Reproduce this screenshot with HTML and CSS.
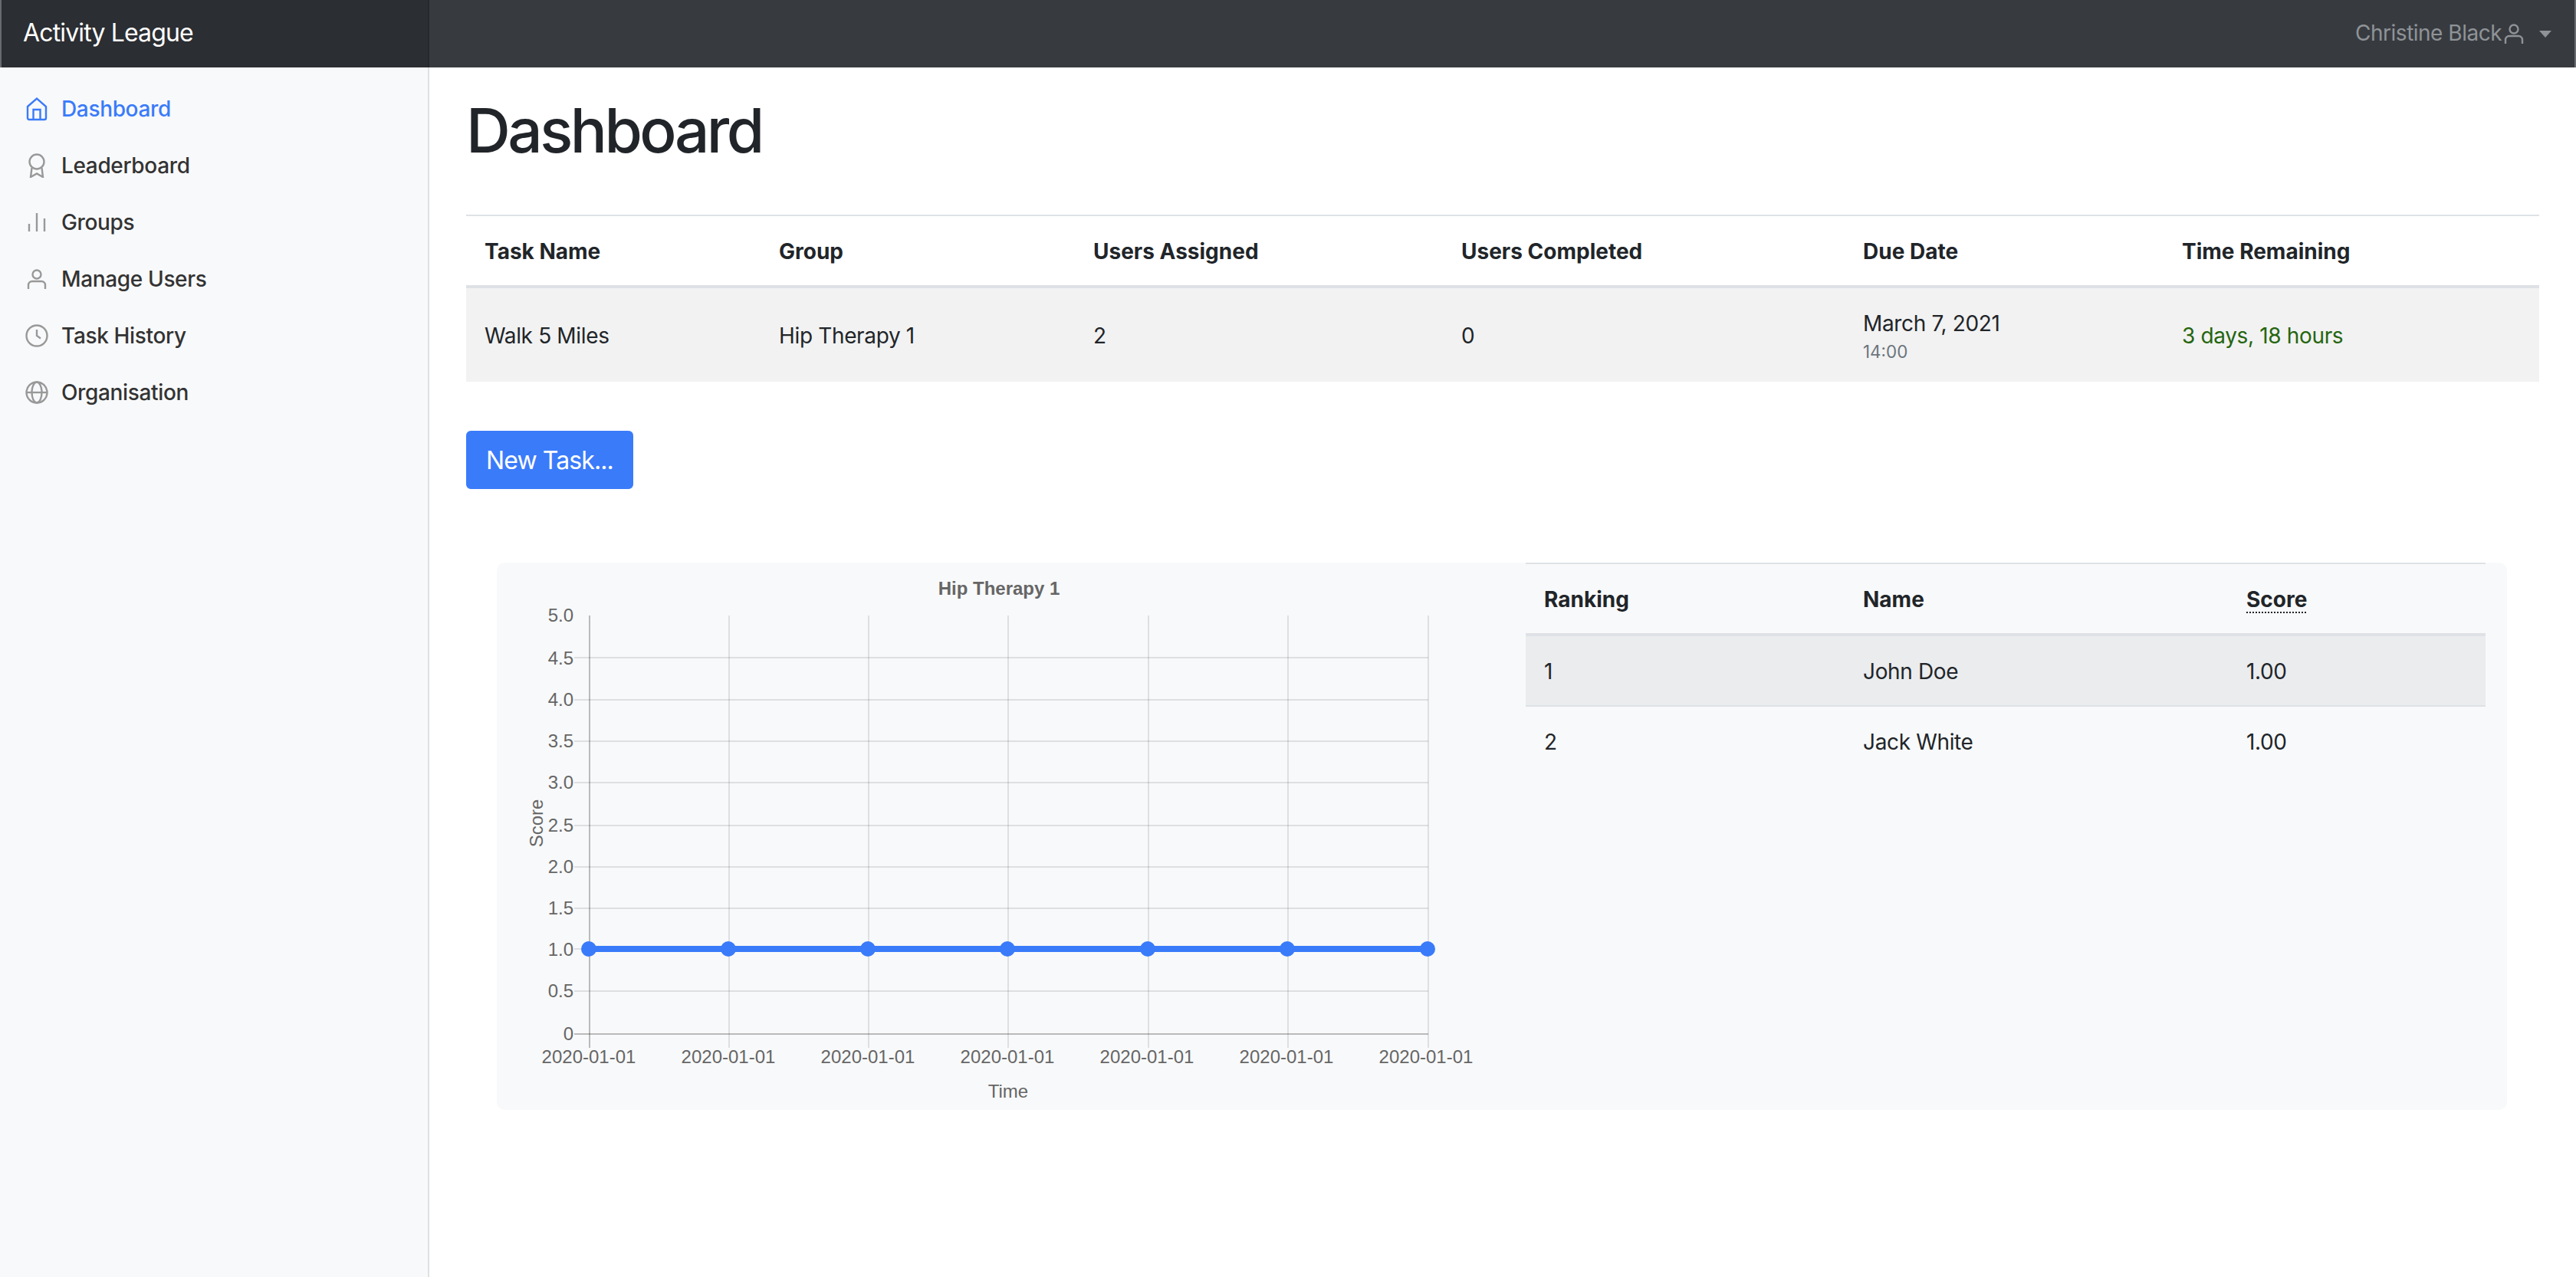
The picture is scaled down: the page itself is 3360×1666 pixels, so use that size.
FILE: index.html
```html
<!DOCTYPE html>
<html lang="en">
<head>
    <meta charset="UTF-8">
    <meta name="viewport" content="width=device-width, initial-scale=1.0">
    <title>Activity League</title>
    <link rel="stylesheet" href="styles.css">
</head>
<body>
    <header class="navbar">
        <a class="brand" href="#">Activity League</a>
        <a class="user-menu" href="#">
            <span>Christine Black</span>
            <svg class="icon" viewBox="0 0 32 32"><circle cx="16" cy="10" r="5.5"/><path d="M5 29v-5a5 5 0 0 1 5-5h12a5 5 0 0 1 5 5v5"/></svg>
            <span class="caret"></span>
        </a>
    </header>

    <div class="layout">
        <nav class="sidebar">
            <a class="nav-link active" href="#">
                <svg class="icon" viewBox="0 0 32 32"><path d="M4 13 16 2.5 28 13v15a2 2 0 0 1-2 2H6a2 2 0 0 1-2-2z"/><path d="M11.5 30V17h9v13"/></svg>
                Dashboard
            </a>
            <a class="nav-link" href="#">
                <svg class="icon" viewBox="0 0 32 32"><circle cx="16" cy="11" r="9.5"/><path d="M9.5 19 8 31l8-4.5 8 4.5-1.500-12"/></svg>
                Leaderboard
            </a>
            <a class="nav-link" href="#">
                <svg class="icon" viewBox="0 0 32 32"><path d="M6 18v10M16 4v24M26 11v17"/></svg>
                Groups
            </a>
            <a class="nav-link" href="#">
                <svg class="icon" viewBox="0 0 32 32"><circle cx="16" cy="10" r="5.500"/><path d="M5 29v-5a5 5 0 0 1 5-5h12a5 5 0 0 1 5 5v5"/></svg>
                Manage Users
            </a>
            <a class="nav-link" href="#">
                <svg class="icon" viewBox="0 0 32 32"><circle cx="16" cy="16" r="13.500"/><path d="M16 8v8l5 3.500"/></svg>
                Task History
            </a>
            <a class="nav-link" href="#">
                <svg class="icon" viewBox="0 0 32 32"><circle cx="16" cy="16" r="13.500"/><ellipse cx="16" cy="16" rx="6.500" ry="13.500"/><path d="M2.500 16h27"/></svg>
                Organisation
            </a>
        </nav>

        <main class="content">
            <h1>Dashboard</h1>

            <table class="data-table task-table">
                <colgroup>
                    <col class="col-task"><col class="col-group"><col class="col-assigned">
                    <col class="col-completed"><col class="col-due"><col>
                </colgroup>
                <thead>
                    <tr>
                        <th>Task Name</th>
                        <th>Group</th>
                        <th>Users Assigned</th>
                        <th>Users Completed</th>
                        <th>Due Date</th>
                        <th>Time Remaining</th>
                    </tr>
                </thead>
                <tbody>
                    <tr class="striped">
                        <td>Walk 5 Miles</td>
                        <td>Hip Therapy 1</td>
                        <td>2</td>
                        <td>0</td>
                        <td>March 7, 2021<small class="due-time">14:00</small></td>
                        <td class="time-left">3 days, 18 hours</td>
                    </tr>
                </tbody>
            </table>

            <button class="btn-primary">New Task...</button>

            <section class="group-panel">
                <svg class="chart" viewBox="0 0 1342 714">
                    <text class="chart-title" x="655" y="33">Hip Therapy 1</text>

                    <g class="grid">
                        <path d="M101 124h1114M101 179h1114M101 233h1114M101 287h1114M101 343h1114M101 397h1114M101 451h1114M101 504h1114M101 559h1114"/>
                        <path d="M303 69v564M485 69v564M667 69v564M850 69v564M1032 69v564M1215 69v564"/>
                    </g>
                    <path class="axis" d="M121 69v564"/>
                    <path class="axis" d="M101 615h1114"/>

                    <g class="tick-y">
                        <text x="100" y="68">5.0</text>
                        <text x="100" y="124">4.5</text>
                        <text x="100" y="178">4.0</text>
                        <text x="100" y="232">3.5</text>
                        <text x="100" y="286">3.0</text>
                        <text x="100" y="342">2.5</text>
                        <text x="100" y="396">2.0</text>
                        <text x="100" y="450">1.5</text>
                        <text x="100" y="504">1.0</text>
                        <text x="100" y="558">0.5</text>
                        <text x="100" y="614">0</text>
                    </g>

                    <g class="tick-x">
                        <text x="120" y="644">2020-01-01</text>
                        <text x="302" y="644">2020-01-01</text>
                        <text x="484" y="644">2020-01-01</text>
                        <text x="666" y="644">2020-01-01</text>
                        <text x="848" y="644">2020-01-01</text>
                        <text x="1030" y="644">2020-01-01</text>
                        <text x="1212" y="644">2020-01-01</text>
                    </g>

                    <text class="axis-label" x="667" y="689">Time</text>
                    <text class="axis-label" transform="translate(51 340) rotate(-90)">Score</text>

                    <path class="series" d="M120 504h1095"/>
                    <g class="points">
                        <circle cx="120" cy="504" r="10"/>
                        <circle cx="302" cy="504" r="10"/>
                        <circle cx="484" cy="504" r="10"/>
                        <circle cx="666" cy="504" r="10"/>
                        <circle cx="849" cy="504" r="10"/>
                        <circle cx="1031" cy="504" r="10"/>
                        <circle cx="1214" cy="504" r="10"/>
                    </g>
                </svg>

                <table class="data-table rank-table">
                    <colgroup>
                        <col class="col-rank"><col class="col-name"><col>
                    </colgroup>
                    <thead>
                        <tr>
                            <th>Ranking</th>
                            <th>Name</th>
                            <th><abbr title="Average score">Score</abbr></th>
                        </tr>
                    </thead>
                    <tbody>
                        <tr class="striped">
                            <td>1</td>
                            <td>John Doe</td>
                            <td>1.00</td>
                        </tr>
                        <tr>
                            <td>2</td>
                            <td>Jack White</td>
                            <td>1.00</td>
                        </tr>
                    </tbody>
                </table>
            </section>
        </main>
    </div>
</body>
</html>
```

FILE: styles.css
```css
* {
    box-sizing: border-box;
}

body {
    margin: 0;
    min-height: 100vh;
    display: flex;
    flex-direction: column;
    font-family: Inter, "Liberation Sans", sans-serif;
    font-size: 28px;
    line-height: 42px;
    letter-spacing: -0.35px;
    color: #212529;
    background-color: #fff;
}

a {
    text-decoration: none;
}

.icon {
    width: 32px;
    height: 32px;
    flex: none;
    fill: none;
    stroke: currentColor;
    stroke-width: 2.4;
}

/* top bar */
.navbar {
    height: 88px;
    display: flex;
    align-items: center;
    justify-content: space-between;
    background-color: #373b40;
    border-left: 2px solid #696b6e;
    border-right: 2px solid #696b6e;
}

.brand {
    width: 558px;
    height: 100%;
    display: flex;
    align-items: center;
    padding: 0 0 3px 28px;
    font-size: 32px;
    letter-spacing: -0.85px;
    color: #fff;
    background-color: #2b2e32;
    border-right: 2px solid #26282c;
}

.user-menu {
    display: flex;
    align-items: center;
    padding-right: 30px;
    letter-spacing: -0.5px;
    color: #8f9397;
}

.user-menu span:first-child {
    margin-top: -2px;
}

.caret {
    margin-left: 17px;
    border-top: 9px solid currentColor;
    border-left: 8px solid transparent;
    border-right: 8px solid transparent;
}

/* page body */
.layout {
    flex: 1;
    display: flex;
}

.sidebar {
    width: 560px;
    flex: none;
    padding-top: 17px;
    background-color: #f8f9fa;
    border-right: 2px solid #dfe0e3;
}

.nav-link {
    display: flex;
    align-items: center;
    gap: 16px;
    padding: 16px 32px;
    font-weight: 500;
    color: #333;
}

.nav-link .icon {
    color: #999;
}

.nav-link.active,
.nav-link.active .icon {
    color: #3a7bfa;
}

.content {
    flex: 1;
    min-width: 0;
    padding: 34px 48px 0;
}

h1 {
    margin: 0 0 62px;
    font-size: 80px;
    font-weight: 500;
    line-height: 96px;
    letter-spacing: -3.5px;
}

/* tables */
.data-table {
    width: 100%;
    table-layout: fixed;
    border-collapse: collapse;
    border-top: 2px solid #dee2e6;
}

.data-table th,
.data-table td {
    padding: 25px 24px 23px;
    text-align: left;
}

.data-table th {
    letter-spacing: 0;
}

.data-table thead {
    border-bottom: 4px solid #dee2e6;
}

.task-table .striped {
    background-color: #f2f2f2;
}

.col-task { width: 384px; }
.col-group { width: 410px; }
.col-assigned { width: 480px; }
.col-completed { width: 524px; }
.col-due { width: 416px; }

.due-time {
    display: block;
    font-size: 22.4px;
    line-height: 32px;
    letter-spacing: 0;
    color: #6c757d;
}

.time-left {
    color: #24650f;
}

.rank-table .striped {
    background-color: #ebecee;
    border-bottom: 2px solid #dee2e6;
}

.col-rank { width: 416px; }
.col-name { width: 500px; }

abbr {
    text-decoration: underline dotted 2px;
    text-underline-offset: 6px;
}

.btn-primary {
    display: block;
    margin-top: 64px;
    padding: 13px 24px 11px;
    font-family: inherit;
    font-size: 32px;
    line-height: 48px;
    letter-spacing: -0.9px;
    color: #fff;
    background-color: #3a7bfa;
    border: 2px solid #3a7bfa;
    border-radius: 6px;
}

/* chart and ranking panel */
.group-panel {
    display: flex;
    align-items: flex-start;
    height: 714px;
    margin: 96px 42px 0 40px;
    padding-right: 28px;
    background-color: #f8f9fa;
    border-radius: 10px;
}

.chart {
    width: 1342px;
    height: 714px;
    flex: none;
}

.rank-table {
    flex: 1;
    min-width: 0;
}

.chart text {
    font-family: "Liberation Sans", Arial, sans-serif;
    font-size: 24px;
    letter-spacing: 0;
    fill: #666;
    dominant-baseline: central;
}

.chart .chart-title {
    font-weight: 700;
    text-anchor: middle;
}

.chart .axis-label,
.tick-x text {
    text-anchor: middle;
}

.tick-y text {
    text-anchor: end;
}

.grid path {
    fill: none;
    stroke: rgba(0, 0, 0, 0.1);
    stroke-width: 2;
}

.chart .axis {
    fill: none;
    stroke: rgba(0, 0, 0, 0.25);
    stroke-width: 2;
}

.series {
    fill: none;
    stroke: #3a7bfa;
    stroke-width: 8;
}

.points circle {
    fill: #3a7bfa;
}
```
